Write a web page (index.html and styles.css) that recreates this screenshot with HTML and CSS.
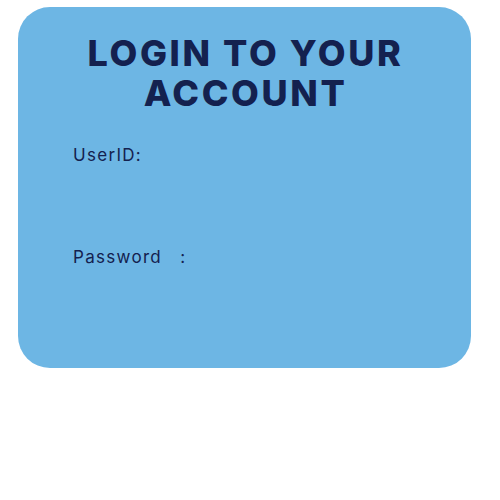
FILE: index.html
```html
<!DOCTYPE html>
<html>
<head>
<meta charset="utf-8">
<link rel="stylesheet" href="styles.css">
</head>
<body>
<div class="card">
  <h1 class="title">LOGIN TO YOUR<br>ACCOUNT</h1>
  <div class="field">UserID:</div>
  <div class="field field-pass">Password&nbsp;&nbsp;&nbsp;:</div>
</div>
</body>
</html>
```
FILE: styles.css
```css
html, body { margin: 0; padding: 0; background: #fff; }
body { padding: 7px 29px 0 18px; }
.card {
  width: 453px;
  height: 361px;
  box-sizing: border-box;
  background: #6db6e4;
  border-radius: 32px;
  padding: 26px 0 0 55px;
  color: #14214f;
  font-family: Inter, "Liberation Sans", sans-serif;
}
.title {
  margin: 0 0 0 -55px;
  padding-left: 2px;
  text-align: center;
  font-size: 36px;
  line-height: 40px;
  font-weight: 800;
  letter-spacing: 2.6px;
}
.field {
  font-size: 17px;
  line-height: 20px;
  letter-spacing: 1.3px;
  margin-top: 32px;
}
.field-pass { margin-top: 82px; }
```
